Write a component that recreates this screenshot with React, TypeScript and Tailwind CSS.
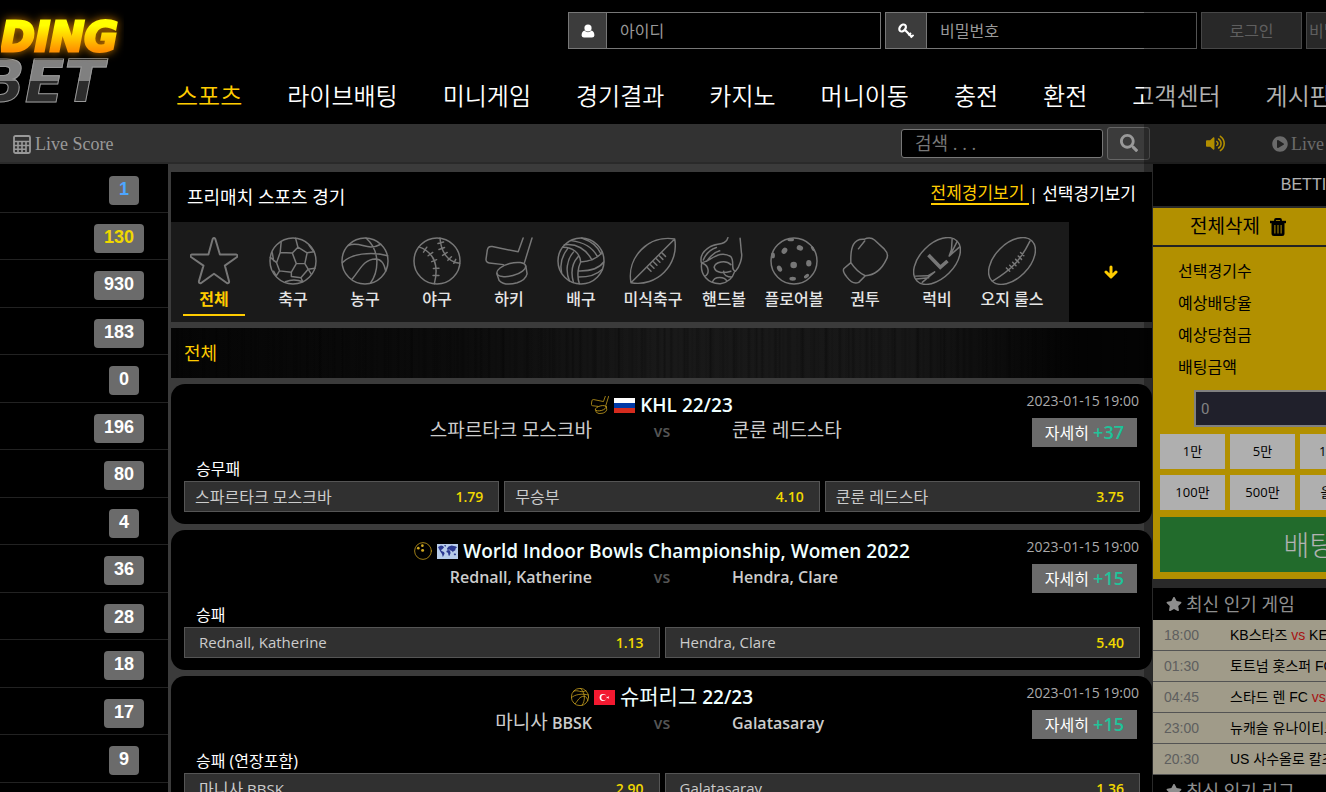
import React from "react";
import {
  FaPlayCircle,
  FaSearch,
  FaStar,
  FaVolumeUp,
} from "react-icons/fa";

interface Sport {
  name: string;
  icon: React.FC<IconProps>;
  width: string;
}

interface IconProps {
  className?: string;
}

interface Match {
  icon: React.FC<IconProps>;
  flag: React.FC;
  league: string;
  home: string;
  away: string;
  date: string;
  more: string;
  market: string;
  odds: { label: string; value: string }[];
}

const LineIcon: React.FC<IconProps & { children: React.ReactNode }> = ({
  className,
  children,
}) => (
  <svg
    viewBox="0 0 146 146"
    className={className}
    fill="none"
    stroke="currentColor"
    strokeWidth="4.5"
    strokeLinecap="round"
    strokeLinejoin="round"
    aria-hidden="true"
  >
    {children}
  </svg>
);

const StarIcon: React.FC<IconProps> = ({ className }) => (
  <LineIcon className={className}>
    <path
      strokeWidth="6"
      d="M69 6Q73 0 77 6L91 53L140 53Q147 55 143 61L106 87L119 135Q119 142 112 140L73 112L34 140Q27 142 27 135L41 87L3 61Q-1 55 6 53L56 53Z"
    />
  </LineIcon>
);

const SoccerIcon: React.FC<IconProps> = ({ className }) => (
  <LineIcon className={className}>
    <circle cx="73" cy="73" r="70" />
    <path d="M23 78L34 47L71 49L83 81L68 107L32 103ZM71 49L88 31L116 48L109 81H83M34 47L37 15M88 31L81 4M116 48L137 45M109 81L119 98L97 124L68 120V107M119 98L140 95M97 124L103 136M23 78L4 62M32 103L22 118M50 136Q75 126 103 136M122 25Q128 34 137 45M22 118L14 104M10 48L14 72M119 98L128 112" />
  </LineIcon>
);

const BasketballIcon: React.FC<IconProps> = ({ className }) => (
  <LineIcon className={className}>
    <circle cx="73" cy="73" r="70" />
    <path d="M22 26C60 10 78 46 121 22M4 78C30 52 90 42 142 57M76 3C118 40 117 100 90 140M34 128C58 100 68 68 105 67C126 67 133 88 136 104" />
  </LineIcon>
);

const BaseballIcon: React.FC<IconProps> = ({ className }) => (
  <LineIcon className={className}>
    <circle cx="73" cy="73" r="70" />
    <path d="M18 30C68 48 78 90 65 142M82 3C85 45 105 76 142 80M42 31L32 46M60 47L46 57M72 69L57 75M79 95L62 96M79 117L61 117M76 20L93 15M79 38L96 32M90 56L104 47M106 71L117 60M124 80L130 68" />
  </LineIcon>
);

const HockeyIcon: React.FC<IconProps> = ({ className }) => (
  <LineIcon className={className}>
    <path d="M116 3L101 45L22 29Q9 27 7 40L3 68Q3 78 13 79L56 84M143 3L120 78" />
    <ellipse cx="80" cy="99" rx="45" ry="19" transform="rotate(-15 80 99)" />
    <path d="M36 112L43 132Q60 150 98 139Q124 130 128 112L124 88" />
  </LineIcon>
);

const VolleyballIcon: React.FC<IconProps> = ({ className }) => (
  <LineIcon className={className}>
    <circle cx="73" cy="73" r="70" />
    <path d="M17 31C46 30 70 48 72 76C64 92 60 120 68 142M50 46C30 68 25 104 38 134M32 36C15 58 9 86 14 108M64 60C46 80 42 110 50 138M72 76C98 74 123 66 138 46M64 103C98 104 128 96 142 76M65 122C94 122 122 114 138 98M22 24C58 18 90 38 106 70M43 11C84 16 110 34 123 60M75 3C108 14 126 32 134 52" />
  </LineIcon>
);

const FootballIcon: React.FC<IconProps> = ({ className }) => (
  <LineIcon className={className}>
    <path d="M6 139C-8 62 60 -8 139 6C153 84 84 154 6 139ZM6 139L139 6M57 94L67 104M66 85L76 95M75 76L85 86M84 67L94 77M93 58L103 68M101 49L111 59" />
  </LineIcon>
);

const HandballIcon: React.FC<IconProps> = ({ className }) => (
  <LineIcon className={className}>
    <path d="M85 2C80 26 48 18 30 30C10 42 0 60 4 78C30 76 58 36 94 60C106 74 92 102 108 104C120 92 130 62 126 48L122 4M10 70C18 50 32 38 50 32M20 74C30 60 44 46 60 42M5 80C0 112 22 143 62 142C88 138 100 122 105 106M94 84C78 68 46 76 43 92C48 112 76 110 94 104M38 137C44 118 74 120 82 134M8 80C28 88 30 112 14 120M72 104C70 116 84 122 96 122" />
  </LineIcon>
);

const FloorballIcon: React.FC<IconProps> = ({ className }) => (
  <LineIcon className={className}>
    <circle cx="73" cy="73" r="70" />
    <g fill="currentColor" stroke="none">
      <ellipse cx="63" cy="8" rx="10" ry="5" />
      <ellipse cx="44" cy="42" rx="8" ry="10" transform="rotate(35 44 42)" />
      <ellipse cx="91" cy="33" rx="10" ry="8" transform="rotate(20 91 33)" />
      <ellipse cx="9" cy="56" rx="6" ry="9" />
      <circle cx="72" cy="85" r="10" />
      <ellipse cx="118" cy="80" rx="8" ry="10" />
      <ellipse cx="29" cy="96" rx="7" ry="10" transform="rotate(-30 29 96)" />
      <ellipse cx="69" cy="127" rx="10" ry="6" />
      <ellipse cx="111" cy="119" rx="9" ry="5" transform="rotate(-35 111 119)" />
      <ellipse cx="130" cy="35" rx="4" ry="9" transform="rotate(-30 130 35)" />
    </g>
  </LineIcon>
);

const BoxingIcon: React.FC<IconProps> = ({ className }) => (
  <LineIcon className={className}>
    <path d="M30 78C28 28 40 4 70 7C82 1 94 2 102 9L132 37Q147 52 138 68C124 98 100 116 74 118Q48 106 30 78ZM30 78L9 96Q3 104 18 122Q36 146 54 138L74 118M53 36L72 12" />
  </LineIcon>
);

const RugbyIcon: React.FC<IconProps> = ({ className }) => (
  <LineIcon className={className}>
    <ellipse cx="73" cy="73" rx="86" ry="52" transform="rotate(-45 73 73)" />
    <path d="M119 6L117 38L110 58L142 30M134 14L116 50M8 119L45 118L66 106L28 138M10 128L48 124" />
    <path
      strokeWidth="11"
      strokeLinecap="butt"
      strokeLinejoin="miter"
      d="M47 55L83 92L105 73"
    />
  </LineIcon>
);

const AussieRulesIcon: React.FC<IconProps> = ({ className }) => (
  <LineIcon className={className}>
    <ellipse cx="73" cy="73" rx="86" ry="52" transform="rotate(-45 73 73)" />
    <path d="M14 134C70 100 100 70 128 12M56 94L66 104M66 86L76 96M75 77L85 87M84 68L94 78M92 58L102 68M99 47L109 57" />
  </LineIcon>
);

const BowlsIcon: React.FC<IconProps> = ({ className }) => (
  <LineIcon className={className}>
    <circle cx="73" cy="73" r="68" />
    <g fill="currentColor" stroke="none">
      <circle cx="35" cy="50" r="11" />
      <circle cx="68" cy="30" r="11" />
      <circle cx="70" cy="68" r="12" />
    </g>
  </LineIcon>
);

const UserIcon: React.FC = () => (
  <svg viewBox="0 0 14 14" className="size-[14px]" fill="currentColor" aria-hidden="true">
    <circle cx="7" cy="4" r="3.6" />
    <path d="M3.4 6.6Q7 10 10.6 6.6Q13.4 7.6 13.4 11.5Q13.2 13.6 11 13.6H3Q.8 13.6.6 11.5Q.6 7.6 3.4 6.6Z" />
  </svg>
);

const KeyIcon: React.FC = () => (
  <svg viewBox="0 0 16 16" className="size-4" fill="none" stroke="currentColor" aria-hidden="true">
    <ellipse cx="4.6" cy="5" rx="3.9" ry="2.8" strokeWidth="2.2" transform="rotate(-50 4.6 5)" />
    <path strokeWidth="2.2" d="M6.5 6.5L13.6 13.6" />
    <path strokeWidth="1.8" d="M10.4 12.4L13 9.8M12.8 14.6L15.6 11.8" />
  </svg>
);

const CalculatorIcon: React.FC = () => (
  <svg viewBox="0 0 18 19" className="h-[19px] w-[18px]" fill="none" stroke="currentColor" aria-hidden="true">
    <rect x="1" y="1" width="16" height="17" rx="1.5" strokeWidth="1.8" />
    <path strokeWidth="1.6" d="M1 6.5H17M1 10.5H17M1 14.3H13M5 6.5V18M9 6.5V18M13 6.5V18" />
  </svg>
);

const TrashIcon: React.FC = () => (
  <svg viewBox="0 0 16 18" className="h-[18px] w-4" fill="none" stroke="currentColor" aria-hidden="true">
    <path strokeWidth="2.4" d="M0 4H16" />
    <path strokeWidth="1.8" d="M5 4V2Q5 1 6 1H10Q11 1 11 2V4" />
    <path
      fill="currentColor"
      fillRule="evenodd"
      stroke="none"
      d="M1.5 4H14.5V15.5Q14.5 18 12 18H4Q1.5 18 1.5 15.5ZM4.4 7V15.5H5.4V7ZM7.5 7V15.5H8.5V7ZM10.6 7V15.5H11.6V7Z"
    />
  </svg>
);

const ArrowDownIcon: React.FC = () => (
  <svg
    viewBox="0 0 14 14"
    className="size-[14px]"
    fill="none"
    stroke="currentColor"
    strokeWidth="3"
    strokeLinecap="round"
    strokeLinejoin="round"
    aria-hidden="true"
  >
    <path d="M7 2V11M2 7L7 12L12 7" />
  </svg>
);

const RussiaFlag: React.FC = () => (
  <svg viewBox="0 0 21 15" className="h-[15px] w-[21px]" aria-hidden="true">
    <path fill="#fff" d="M0 0h21v5H0z" />
    <path fill="#0039a6" d="M0 5h21v5H0z" />
    <path fill="#d52b1e" d="M0 10h21v5H0z" />
  </svg>
);

const WorldFlag: React.FC = () => (
  <svg viewBox="0 0 21 15" className="h-[15px] w-[21px]" aria-hidden="true">
    <path fill="#b8cdea" d="M0 0h21v15H0z" />
    <path
      fill="#2b3990"
      d="M1 3l3-1.4 2 .4 1 1.5-2 2-1 .6.6 1L7 8l.6 1.5L6.4 12l-.6 1-.8-3-1.4-2L2 5zM7 1.3l2-.3-.6 2zM9.4 7l1.6-1 2 .6.6 2.4-1.3 3-.7-.6-.6-2.6-1.4-.6zM10 4.6l1.6-2 3-1 4.4.9 1 1.1-1.4 1-.4 2-1.6.5-.6 1.4-1-1.6-1.5-.3-1-1-2 .4zM16.5 10l1.7-.7.9 1.4-1.2.9z"
    />
  </svg>
);

const TurkeyFlag: React.FC = () => (
  <svg viewBox="0 0 21 15" className="h-[15px] w-[21px]" aria-hidden="true">
    <path fill="#f31930" d="M0 0h21v15H0z" />
    <circle cx="9" cy="7.5" r="3.4" fill="#fff" />
    <circle cx="10" cy="7.5" r="2.7" fill="#f31930" />
    <path fill="#fff" d="M12.2 7.5l3-1.3-.6 1.3.6 1.3z" />
  </svg>
);

const NAV_ITEMS = [
  "스포츠",
  "라이브배팅",
  "미니게임",
  "경기결과",
  "카지노",
  "머니이동",
  "충전",
  "환전",
  "고객센터",
  "게시판",
];

const COUNTS = [
  "1",
  "130",
  "930",
  "183",
  "0",
  "196",
  "80",
  "4",
  "36",
  "28",
  "18",
  "17",
  "9",
];

const SPORTS: Sport[] = [
  { name: "전체", icon: StarIcon, width: "w-[86px]" },
  { name: "축구", icon: SoccerIcon, width: "w-[72px]" },
  { name: "농구", icon: BasketballIcon, width: "w-[72px]" },
  { name: "야구", icon: BaseballIcon, width: "w-[72px]" },
  { name: "하키", icon: HockeyIcon, width: "w-[72px]" },
  { name: "배구", icon: VolleyballIcon, width: "w-[72px]" },
  { name: "미식축구", icon: FootballIcon, width: "w-[72px]" },
  { name: "핸드볼", icon: HandballIcon, width: "w-[70px]" },
  { name: "플로어볼", icon: FloorballIcon, width: "w-[70px]" },
  { name: "권투", icon: BoxingIcon, width: "w-[72px]" },
  { name: "럭비", icon: RugbyIcon, width: "w-[72px]" },
  { name: "오지 룰스", icon: AussieRulesIcon, width: "w-[78px]" },
];

const MATCHES: Match[] = [
  {
    icon: HockeyIcon,
    flag: RussiaFlag,
    league: "KHL 22/23",
    home: "스파르타크 모스크바",
    away: "쿤룬 레드스타",
    date: "2023-01-15 19:00",
    more: "+37",
    market: "승무패",
    odds: [
      { label: "스파르타크 모스크바", value: "1.79" },
      { label: "무승부", value: "4.10" },
      { label: "쿤룬 레드스타", value: "3.75" },
    ],
  },
  {
    icon: BowlsIcon,
    flag: WorldFlag,
    league: "World Indoor Bowls Championship, Women 2022",
    home: "Rednall, Katherine",
    away: "Hendra, Clare",
    date: "2023-01-15 19:00",
    more: "+15",
    market: "승패",
    odds: [
      { label: "Rednall, Katherine", value: "1.13" },
      { label: "Hendra, Clare", value: "5.40" },
    ],
  },
  {
    icon: BasketballIcon,
    flag: TurkeyFlag,
    league: "슈퍼리그 22/23",
    home: "마니사 BBSK",
    away: "Galatasaray",
    date: "2023-01-15 19:00",
    more: "+15",
    market: "승패 (연장포함)",
    odds: [
      { label: "마니사 BBSK", value: "2.90" },
      { label: "Galatasaray", value: "1.36" },
    ],
  },
];

const SLIP_LABELS = ["선택경기수", "예상배당율", "예상당첨금"];

const AMOUNTS = [
  ["1만", "5만", "10만"],
  ["100만", "500만", "올인"],
];

const POPULAR = [
  { time: "18:00", home: "KB스타즈", away: "KEB" },
  { time: "01:30", home: "토트넘 홋스퍼 FC", away: "" },
  { time: "04:45", home: "스타드 렌 FC", away: "PSG" },
  { time: "23:00", home: "뉴캐슬 유나이티드", away: "" },
  { time: "20:30", home: "US 사수올로 칼초", away: "" },
];

// Hangul gets its own size and weight next to semibold Latin text
const MixedText: React.FC<{ text: string; hangulClass: string }> = ({
  text,
  hangulClass,
}) => (
  <>
    {text.split(/([가-힣]+(?: [가-힣]+)*)/).map((part, i) =>
      i % 2 === 1 ? (
        <span key={i} className={hangulClass}>
          {part}
        </span>
      ) : (
        part
      )
    )}
  </>
);

const Header: React.FC = () => (
  <header className="flex h-[124px] bg-black">
    <a
      href="#"
      className="flex w-[124px] shrink-0 flex-col items-end overflow-hidden pt-[14px] font-['DejaVu_Sans',sans-serif] font-bold italic"
    >
      <span className="bg-[linear-gradient(#ffff00_25%,#ff9000_80%)] bg-clip-text pr-[6px] text-[41px] leading-[46px] text-transparent drop-shadow-[0_0_5px_#c87800] [-webkit-text-stroke:3px_transparent]">
        DING
      </span>
      <span className="bg-[linear-gradient(#808080_48%,#2c2c2c_48%)] bg-clip-text pr-5 text-[58px] leading-[44px] text-transparent [-webkit-text-stroke:1px_#999]">
        BET
      </span>
    </a>
    <div className="min-w-0 flex-1 overflow-hidden pl-[52px]">
      <form className="flex h-[49px] gap-1 pt-3 pl-[392px] text-base">
        <label className="flex h-[37px] w-[313px] shrink-0 border border-[#777]">
          <span className="flex w-[38px] shrink-0 items-center justify-center border-r border-[#777] bg-[#3c3c3c] text-white">
            <UserIcon />
          </span>
          <input
            type="text"
            aria-label="아이디"
            placeholder="아이디"
            className="w-full min-w-0 bg-black px-[13px] text-white outline-none placeholder:text-[#999]"
          />
        </label>
        <label className="flex h-[37px] w-[312px] shrink-0 border border-[#777]">
          <span className="flex w-[41px] shrink-0 items-center justify-center border-r border-[#777] bg-[#3c3c3c] text-white">
            <KeyIcon />
          </span>
          <input
            type="password"
            aria-label="비밀번호"
            placeholder="비밀번호"
            className="w-full min-w-0 bg-black px-[13px] text-white outline-none placeholder:text-[#999]"
          />
        </label>
        <button
          type="button"
          className="h-[37px] w-[101px] shrink-0 border border-[#666] bg-[#3a3a3a] text-[#888]"
        >
          로그인
        </button>
        <button
          type="button"
          className="h-[37px] w-[140px] shrink-0 border border-[#666] bg-[#3a3a3a] px-[2px] text-left text-[#888]"
        >
          비밀번호찾기
        </button>
      </form>
      <nav className="flex gap-[45px] pt-[31px] text-2xl font-[350] whitespace-nowrap text-white">
        {NAV_ITEMS.map((item, i) => (
          <a key={item} href="#" className={i === 0 ? "text-[#ffcc00]" : ""}>
            {item}
          </a>
        ))}
      </nav>
    </div>
  </header>
);

const SubBar: React.FC = () => (
  <div className="flex h-10 items-center border-b-2 border-[#2a2a2a] bg-[#323232] pl-[13px] font-['Liberation_Serif',serif] text-lg text-[#999]">
    <a href="#" className="flex items-center gap-1 pt-[2px]">
      <CalculatorIcon />
      Live Score
    </a>
    <form className="ml-auto flex items-center gap-1 font-['Open_Sans','Noto_Sans_CJK_KR',sans-serif]">
      <input
        type="text"
        aria-label="검색"
        placeholder="검색 . . ."
        className="h-[29px] w-[202px] rounded-[3px] border border-[#777] bg-black px-[13px] text-lg text-white outline-none placeholder:text-[#777]"
      />
      <button
        type="button"
        aria-label="검색하기"
        className="flex h-[33px] w-[43px] items-center justify-center rounded-[3px] border border-[#666] bg-[#3b3b3b] text-[#999]"
      >
        <FaSearch className="size-[18px]" />
      </button>
    </form>
    <div className="flex w-[176px] shrink-0 items-center gap-[47px] overflow-hidden pl-14 whitespace-nowrap">
      <button type="button" aria-label="소리" className="text-[#ffcc00]">
        <FaVolumeUp className="size-[19px]" />
      </button>
      <a href="#" className="flex shrink-0 items-center gap-[3px] pt-[2px]">
        <FaPlayCircle className="size-4" />
        Live
      </a>
    </div>
  </div>
);

const CountList: React.FC = () => (
  <aside className="w-[168px] shrink-0 bg-black pt-[1px]">
    <ul>
      {COUNTS.map((count, i) => (
        <li
          key={i}
          className="flex justify-end border-b border-[#222] pt-[11px] pr-6 odd:h-[48px] even:h-[47px]"
        >
          <span
            className={`h-[29px] rounded-[4px] bg-[#6b6b6b] px-[10px] font-['Liberation_Sans',sans-serif] text-lg leading-[27px] font-bold ${
              count.length === 1 ? "mr-[5px]" : ""
            } ${i === 0 ? "text-[#4da6ff]" : i === 1 ? "text-[#f0d800]" : "text-white"}`}
          >
            {count}
          </span>
        </li>
      ))}
    </ul>
  </aside>
);

const SportTabs: React.FC = () => (
  <div className="flex h-[100px]">
    <div className="flex min-w-0 flex-1 overflow-hidden bg-[#1a1a1a]">
      {SPORTS.map(({ name, icon: Icon, width }, i) => (
        <button
          key={name}
          type="button"
          className={`flex shrink-0 flex-col items-center pt-[15px] text-base leading-5 whitespace-nowrap ${width} ${
            i === 0 ? "font-bold text-[#ffcc00]" : "font-medium text-[#e5e5e5]"
          }`}
        >
          <Icon className="size-12 text-[#777]" />
          <span
            className={`mt-1 h-[27px] border-b-2 ${
              i === 0 ? "w-[62px] border-[#ffcc00]" : "border-transparent"
            }`}
          >
            {name}
          </span>
        </button>
      ))}
    </div>
    <button
      type="button"
      aria-label="더보기"
      className="flex w-[83px] shrink-0 items-center justify-center bg-black text-[#ffcc00]"
    >
      <ArrowDownIcon />
    </button>
  </div>
);

const MatchCard: React.FC<{ match: Match }> = ({ match }) => {
  const Icon = match.icon;
  const Flag = match.flag;
  const threeWay = match.odds.length === 3;

  return (
    <article className="relative mt-[6px] h-[140px] rounded-[14px] bg-black pt-2 pr-3 pl-[13px]">
      <h2 className="flex h-[26px] items-center justify-center gap-[5px] text-[19px] leading-[26px] font-semibold text-[#f0ffff]">
        <Icon className="size-[18px] text-[#d4aa20] [stroke-width:6]" />
        <Flag />
        <span>
          <MixedText
            text={match.league}
            hangulClass="text-[21px] leading-none font-normal"
          />
        </span>
      </h2>
      <div className="grid h-[26px] grid-cols-[1fr_140px_1fr] text-base leading-[26px] font-semibold text-[#ccc]">
        <span className="text-right">
          <MixedText
            text={match.home}
            hangulClass="text-[19px] leading-none font-normal"
          />
        </span>
        <span className="text-center text-[#555]">vs</span>
        <span>
          <MixedText
            text={match.away}
            hangulClass="text-[19px] leading-none font-normal"
          />
        </span>
      </div>
      <div className="absolute top-[7px] right-[13px] flex flex-col items-end gap-2">
        <time className="text-sm leading-[19px] text-[#aaa]">{match.date}</time>
        <button
          type="button"
          className="mr-[2px] h-[29px] bg-[#6b6b6b] px-[13px] text-base leading-[29px] text-white"
        >
          자세히{" "}
          <span className="text-lg leading-[29px] font-semibold text-[#1ec49a]">
            {match.more}
          </span>
        </button>
      </div>
      <p className="mt-[14px] pl-3 text-base leading-[22px] text-white">{match.market}</p>
      <div className="mt-[1px] flex gap-[5px]">
        {match.odds.map((odd) => (
          <button
            key={odd.label}
            type="button"
            className={`flex h-[31px] flex-1 items-center justify-between border border-[#555] bg-[#303030] pr-[15px] text-[15px] text-[#ccc] ${
              threeWay ? "pl-[10px]" : "pl-[14px]"
            }`}
          >
            <span>
              <MixedText text={odd.label} hangulClass="text-base" />
            </span>
            <span className="text-sm font-semibold text-[#f0d800]">{odd.value}</span>
          </button>
        ))}
      </div>
    </article>
  );
};

const BetSlip: React.FC = () => (
  <aside className="w-[173px] shrink-0 overflow-hidden bg-[#3b3b3b]">
    <div className="w-[364px]">
      <h2 className="h-[42px] bg-black text-center font-['Liberation_Sans',sans-serif] text-base leading-[42px] text-white">
        BETTING SLIP
      </h2>
      <div className="mt-[2px] bg-[#ffce00] pb-[7px] text-black">
        <button
          type="button"
          className="flex h-[39px] w-full items-center gap-[10px] border-b-2 border-[#333] pl-[37px] text-[19px]"
        >
          전체삭제
          <TrashIcon />
        </button>
        <div className="pt-2 pl-[25px] text-base leading-8">
          {SLIP_LABELS.map((label) => (
            <p key={label}>{label}</p>
          ))}
          <label htmlFor="amount" className="block">
            배팅금액
          </label>
        </div>
        <input
          id="amount"
          type="text"
          placeholder="0"
          className="mt-[7px] ml-[41px] block h-[37px] w-[300px] border-2 border-[#b8b8b8] bg-[#2e2e3e] px-[5px] font-['Roboto',sans-serif] text-[15px] placeholder:text-[#bbb]"
        />
        <div className="mt-[7px] flex flex-col gap-[6px] pl-[7px]">
          {AMOUNTS.map((row) => (
            <div key={row[0]} className="flex gap-[5px]">
              {row.map((amount) => (
                <button
                  key={amount}
                  type="button"
                  className="h-[35px] w-[65px] bg-[#fbfbfb] text-[13px]"
                >
                  {amount}
                </button>
              ))}
            </div>
          ))}
        </div>
        <button
          type="button"
          className="mx-[7px] mt-[7px] h-[55px] w-[350px] bg-[#319a3f] text-[28px] font-light text-white"
        >
          배팅하기
        </button>
      </div>
      <h3 className="mt-[9px] flex h-8 items-center gap-1 bg-black pl-[13px] text-lg text-[#ccc]">
        <FaStar className="size-4" />
        최신 인기 게임
      </h3>
      <ul className="font-['Liberation_Sans','Noto_Sans_CJK_KR',sans-serif] text-sm whitespace-nowrap">
        {POPULAR.map((game) => (
          <li
            key={game.time}
            className="flex h-[31px] items-center border-b border-[#777] bg-[#e5dfc5] pl-[11px] text-black"
          >
            <time className="w-[66px] text-[#888]">{game.time}</time>
            <span>
              {game.home} <span className="text-[#f02020]">vs</span> {game.away}
            </span>
          </li>
        ))}
      </ul>
      <h3 className="flex h-8 items-center gap-1 bg-black pl-[13px] text-lg text-[#ccc]">
        <FaStar className="size-4" />
        최신 인기 리그
      </h3>
    </div>
  </aside>
);

const App: React.FC = () => {
  return (
    <div className="relative h-screen overflow-hidden bg-black font-['Open_Sans','Noto_Sans_CJK_KR',sans-serif]">
      <Header />
      <SubBar />
      <div className="flex">
        <CountList />
        <main className="min-w-0 flex-1 bg-[#3b3b3b] pt-2 pr-[1px] pl-[3px]">
          <div className="flex h-[50px] items-center justify-between bg-black px-4 text-white">
            <h1 className="text-lg">프리매치 스포츠 경기</h1>
            <div className="flex items-center pb-[6px] text-[17px] leading-5">
              <a
                href="#"
                className="border-b-2 border-[#ffcc00] whitespace-pre text-[#ffcc00]"
              >
                {"전제경기보기 "}
              </a>
              <span>|</span>
              <a href="#" className="pl-1">
                선택경기보기
              </a>
            </div>
          </div>
          <SportTabs />
          <h2 className="mt-[6px] h-[50px] bg-[repeating-linear-gradient(90deg,#0000_0_4px,#0003_6px,#0000_9px,#0000_13px),repeating-linear-gradient(90deg,#0000_0_9px,#0004_11px,#0000_12px,#0000_23px),repeating-linear-gradient(90deg,#0000_0_2px,#0002_3px,#0000_5px,#0000_7px),linear-gradient(90deg,#050505,#0c0c0c_30%,#191919_50%,#171717_75%,#030303_92%)] pl-[13px] text-lg leading-[50px] text-[#ffcc00]">
            전체
          </h2>
          {MATCHES.map((match) => (
            <MatchCard key={match.league} match={match} />
          ))}
        </main>
        <BetSlip />
      </div>

      {/* dimmed strip over the cart */}
      <div className="pointer-events-none absolute inset-y-0 right-0 w-[182px] bg-black/30" />
    </div>
  );
};

export default App;
